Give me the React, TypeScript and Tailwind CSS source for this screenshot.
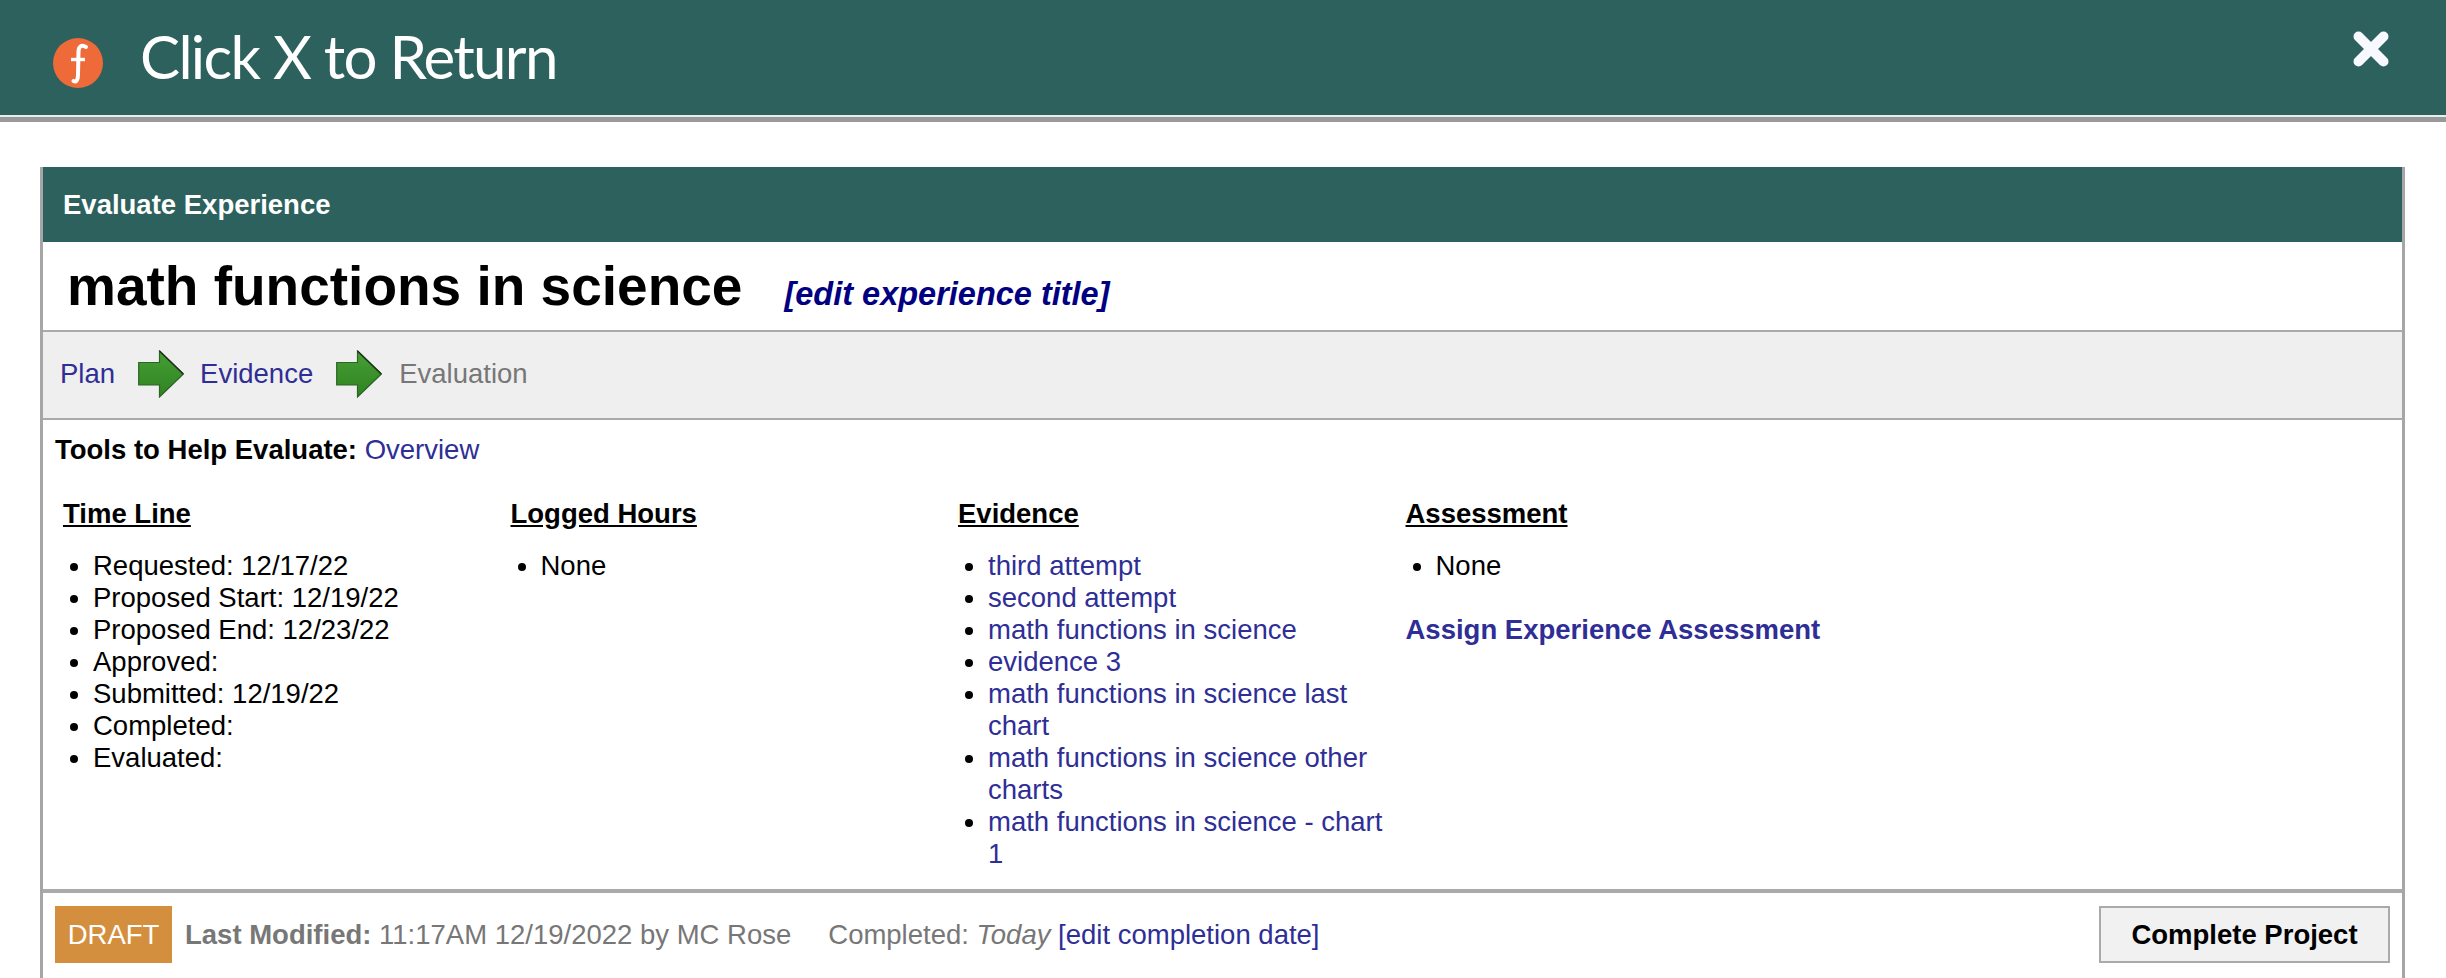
import React from "react";

const Arrow = ({ id }: { id: string }) => (
  <svg width="46" height="48" viewBox="0 0 46 48" className="shrink-0">
    <defs>
      <linearGradient id={id} x1="0" y1="0" x2="0" y2="1">
        <stop offset="0" stopColor="#46a035" />
        <stop offset="1" stopColor="#2f8222" />
      </linearGradient>
    </defs>
    <path d="M0.7 12.5H21.5V1L45.300 24L21.500 47V35H0.7Z" fill={`url(#${id})`} stroke="#2c6426" strokeWidth="1.2" />
    <path d="M21.500 1L45.300 24" stroke="#1e2e1a" strokeWidth="1.4" />
  </svg>
);

const Logo = () => (
  <svg width="50" height="50" viewBox="0 0 50 50" className="shrink-0">
    <circle cx="25" cy="25" r="25" fill="#ee6a38" />
    <path d="M33 9C28 6 25.500 9 25.500 14L25 37C25 42 23 44.500 20.500 43" fill="none" stroke="#fff" strokeWidth="4" strokeLinecap="round" />
    <path d="M18 21.500H32" stroke="#fff" strokeWidth="3.400" />
  </svg>
);

const Link = ({ children }: { children: React.ReactNode }) => <a className="text-[#2e2e96]">{children}</a>;

export default function App() {
  return (
    <div className="h-[978px] w-[2446px] overflow-hidden bg-white font-['Liberation_Sans',Arial,sans-serif] text-[27.5px] leading-[32px] text-black">
      <header className="flex h-[122px] items-start border-b-[5px] border-[#999999] bg-[#2d615d] pl-[53px] pr-[57px] shadow-[inset_0_-2px_0_#e6efee]">
        <div className="mt-[38px]"><Logo /></div>
        <div className="ml-[37px] mt-[20px] font-['Lato',sans-serif] text-[60px] leading-[72px] tracking-[-1.7px] text-white">Click X to Return</div>
        <div className="ml-auto mt-[31px]">
          <svg width="36" height="36" viewBox="0 0 36 36" className="block"><path d="M5.500 5.500L30.500 30.500M30.500 5.500L5.500 30.500" stroke="#f8f8ff" strokeWidth="10" strokeLinecap="round" /></svg>
        </div>
      </header>
      <main className="pl-[40px] pr-[41px] pt-[45px]">
        <section className="h-[811px] border-x-[3px] border-[#a6a6a6]">
          <div className="flex h-[75px] items-center bg-[#2d615d] pl-[20px] font-bold text-white">Evaluate Experience</div>
          <div className="flex h-[90px] items-baseline border-b-2 border-[#aaaaaa] pl-[24px] pt-[13px]">
            <h1 className="text-[55px] font-bold leading-[62px]">math functions in science</h1>
            <a className="ml-[42px] text-[32.500px] font-bold italic text-[#000080]">[edit experience title]</a>
          </div>
          <div className="flex h-[88px] items-center border-b-2 border-[#aaaaaa] bg-[#efefef] pb-[2px] pl-[17px]">
            <Link>Plan</Link>
            <span className="ml-[23px] mr-[16px] flex"><Arrow id="a1" /></span>
            <Link>Evidence</Link>
            <span className="ml-[23px] mr-[17px] flex"><Arrow id="a2" /></span>
            <a className="text-[#777777]">Evaluation</a>
          </div>
          <div className="px-[12px] pt-[14px]">
            <b>Tools to Help Evaluate:</b> <Link>Overview</Link>
          </div>
          <div className="flex pl-[20px] pt-[32px]">
            <div className="w-[447.500px] shrink-0">
              <h2 className="font-bold underline">Time Line</h2>
              <ul className="mt-[20px] list-disc pl-[30px]">
                <li>Requested: 12/17/22</li>
                <li>Proposed Start: 12/19/22</li>
                <li>Proposed End: 12/23/22</li>
                <li>Approved:</li>
                <li>Submitted: 12/19/22</li>
                <li>Completed:</li>
                <li>Evaluated:</li>
              </ul>
            </div>
            <div className="w-[447.500px] shrink-0">
              <h2 className="font-bold underline">Logged Hours</h2>
              <ul className="mt-[20px] list-disc pl-[30px]"><li>None</li></ul>
            </div>
            <div className="w-[447.500px] shrink-0 pr-[20px]">
              <h2 className="font-bold underline">Evidence</h2>
              <ul className="mt-[20px] list-disc pl-[30px]">
                <li><Link>third attempt</Link></li>
                <li><Link>second attempt</Link></li>
                <li><Link>math functions in science</Link></li>
                <li><Link>evidence 3</Link></li>
                <li><Link>math functions in science last chart</Link></li>
                <li><Link>math functions in science other charts</Link></li>
                <li><Link>math functions in science - chart 1</Link></li>
              </ul>
            </div>
            <div className="flex-1">
              <h2 className="font-bold underline">Assessment</h2>
              <ul className="mt-[20px] list-disc pl-[30px]"><li>None</li></ul>
              <a className="mt-[32px] block font-bold text-[#2e2e96]">Assign Experience Assessment</a>
            </div>
          </div>
          <div className="mt-[19px] flex items-start border-t-4 border-[#aaaaaa] pl-[12px] pr-[12px] pt-[13px] text-[#777777]">
            <span className="flex h-[57px] w-[117px] shrink-0 items-center justify-center bg-[#d38f3d] text-white">DRAFT</span>
            <span className="ml-[13px] mt-[13px]"><b>Last Modified:</b> 11:17AM 12/19/2022 by MC Rose</span>
            <span className="ml-[37px] mt-[13px]">Completed: <i>Today</i> <Link>[edit completion date]</Link></span>
            <button className="ml-auto h-[57px] w-[291px] border-2 border-[#aaaaaa] bg-[#f1f1f1] font-bold text-black">Complete Project</button>
          </div>
        </section>
      </main>
    </div>
  );
}
